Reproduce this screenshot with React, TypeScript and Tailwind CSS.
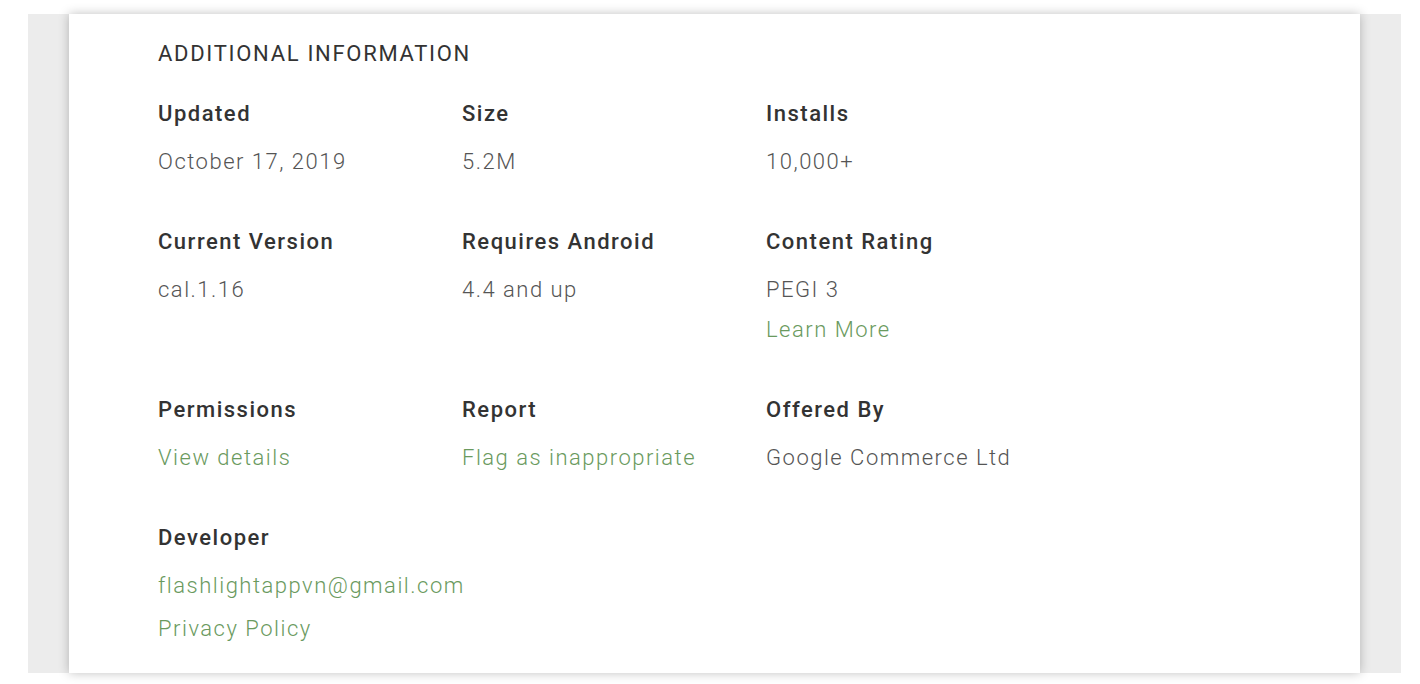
export default function App() {
  const rows = [
    [
      { label: "Updated", values: [{ text: "October 17, 2019" }] },
      { label: "Size", values: [{ text: "5.2M" }] },
      { label: "Installs", values: [{ text: "10,000+" }] },
    ],
    [
      { label: "Current Version", values: [{ text: "cal.1.16" }] },
      { label: "Requires Android", values: [{ text: "4.4 and up" }] },
      {
        label: "Content Rating",
        values: [{ text: "PEGI 3" }, { text: "Learn More", link: true }],
      },
    ],
    [
      { label: "Permissions", values: [{ text: "View details", link: true }] },
      { label: "Report", values: [{ text: "Flag as inappropriate", link: true }] },
      { label: "Offered By", values: [{ text: "Google Commerce Ltd" }] },
    ],
    [
      {
        label: "Developer",
        values: [
          { text: "flashlightappvn@gmail.com", link: true },
          { text: "Privacy Policy", link: true, extra: true },
        ],
      },
    ],
  ]

  return (
    <div
      className="min-h-[684px] bg-white pt-[14px] pl-[28px] pb-[11px]"
      style={{ fontFamily: "Roboto, 'Liberation Sans', sans-serif" }}
    >
      <div className="w-[1373px] h-[659px] bg-[#ececec] px-[41px]">
        <div className="h-full bg-white shadow-[0_0_10px_rgba(0,0,0,0.25)] pl-[89px] pt-[20px]">
          <h2 className="h-[40px] leading-[40px] text-[22px] font-normal tracking-[1.7px] text-[#333] uppercase">
            Additional Information
          </h2>
          <div className="mt-[20px] flex flex-col gap-[40px]">
            {rows.map((row, i) => (
              <div key={i} className="flex">
                {row.map((item) => (
                  <div key={item.label} className="w-[304px]">
                    <div className="h-[40px] leading-[40px] text-[22px] font-medium tracking-[1.5px] text-[#333] mb-[8px]">
                      {item.label}
                    </div>
                    {item.values.map((v) => (
                      <div
                        key={v.text}
                        className={`h-[40px] leading-[40px] text-[22px] font-light tracking-[1.5px] ${
                          v.link ? "text-[#6a9a5e]" : "text-[#555]"
                        } ${"extra" in v && v.extra ? "mt-[3px]" : ""}`}
                      >
                        {v.text}
                      </div>
                    ))}
                  </div>
                ))}
              </div>
            ))}
          </div>
        </div>
      </div>
    </div>
  )
}
